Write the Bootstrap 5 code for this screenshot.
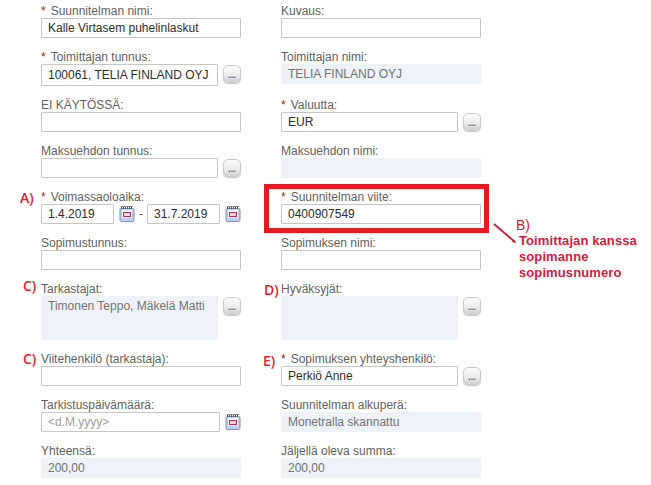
<!DOCTYPE html>
<html lang="fi">
<head>
<meta charset="utf-8">
<title>Suunnitelma</title>
<link href="https://cdn.jsdelivr.net/npm/bootstrap@5.3.0/dist/css/bootstrap.min.css" rel="stylesheet">
<style>
html,body{background:#fff;height:485px;overflow:hidden}
body{font-family:"Liberation Sans",Arial,sans-serif;font-size:12px;color:#333;position:relative}
.sheet{display:grid;grid-template-columns:200px 200px;column-gap:40px;row-gap:12px;padding:4px 0 0 41px;align-items:start}
.fld-label{display:block;margin:0;height:14px;line-height:14px;color:#626262;font-size:12px;white-space:nowrap}
.req{color:#8a2b2b;margin-right:5px}
.form-control.fld{height:20px;min-height:0;padding:0 6px;font-size:12px;line-height:18px;border:1px solid #c6c6c6;border-radius:1px;color:#2e2e2e;background:#fff;box-shadow:none;font-family:inherit}
.form-control.fld.tall{height:22px}
.form-control.fld.ro{background:#eef2f9;border-color:#eef2f9;color:#737373}
.form-control.fld.area{height:44px;resize:none;overflow:hidden}
.form-control.fld::placeholder{color:#a0a0a0;opacity:1}
.with-btn{gap:5px;align-items:flex-start}
.with-btn .form-control{flex:1 1 0;min-width:0}
.dots{flex:none;width:18px;height:18px;margin-top:1px;padding:0;border:1px solid #c9cbce;border-radius:5px;background:linear-gradient(#fdfdfd,#ececec 55%,#cfd1d4);color:#4a4f5c;font-size:9px;font-weight:700;line-height:19px;text-align:center;box-shadow:0 1px 1px #c4c4c4}
.cal{flex:none;width:16px;height:17px;display:block;margin-top:1px}
.date-in{flex:none;width:73px}
.form-control.fld.date-wide{flex:1 1 0;width:auto}
.dash{width:6px;text-align:center;line-height:20px;color:#555;flex:none;margin:0 -2px}
.ann{position:absolute;color:#e1202f;font-family:"Open Sans",sans-serif;font-weight:600;font-size:14px;line-height:16px;white-space:nowrap}
.ann-plain{position:absolute;left:516px;top:217px;color:#d3203a;font-family:"Liberation Sans",Arial,sans-serif;font-size:14px;line-height:16px}
.note{position:absolute;left:519px;top:233px;color:#d3203a;font-family:"Liberation Sans",Arial,sans-serif;font-weight:700;font-size:13px;letter-spacing:.1px;line-height:16px;white-space:nowrap}
.redbox{position:absolute;left:264px;top:184px;width:225px;height:49px;border:5px solid #e51b24;pointer-events:none}
.arrow{position:absolute;left:490px;top:220px}
</style>
</head>
<body>
<svg width="0" height="0" class="position-absolute">
  <defs>
    <symbol id="calicon" viewBox="0 0 16 17">
      <rect x="1" y="3.5" width="14" height="13" rx="1.5" fill="#bdd0ec" stroke="#7f93b5"/>
      <path d="M2.5 1v3M4.5 1v3M6.5 1v3M8.5 1v3M10.5 1v3M12.5 1v3" stroke="#555" stroke-width="1"/>
      <path d="M2 1.5h12" stroke="#888" stroke-width="1"/>
      <rect x="3" y="5" width="10" height="8" fill="#f4f5fa"/>
      <rect x="4.5" y="7.5" width="7" height="4" fill="#efd9e2" stroke="#b5304f"/>
    </symbol>
  </defs>
</svg>
<div class="sheet">
  <div><label class="fld-label"><span class="req">*</span>Suunnitelman nimi:</label><input class="form-control fld" value="Kalle Virtasem puhelinlaskut"></div>
  <div><label class="fld-label">Kuvaus:</label><input class="form-control fld"></div>

  <div><label class="fld-label"><span class="req">*</span>Toimittajan tunnus:</label><div class="d-flex with-btn"><input class="form-control fld tall" value="100061, TELIA FINLAND OYJ"><div class="dots">...</div></div></div>
  <div><label class="fld-label">Toimittajan nimi:</label><input class="form-control fld ro" readonly value="TELIA FINLAND OYJ"></div>

  <div><label class="fld-label">EI KÄYTÖSSÄ:</label><input class="form-control fld"></div>
  <div><label class="fld-label"><span class="req">*</span>Valuutta:</label><div class="d-flex with-btn"><input class="form-control fld" value="EUR"><div class="dots">...</div></div></div>

  <div><label class="fld-label">Maksuehdon tunnus:</label><div class="d-flex with-btn"><input class="form-control fld"><div class="dots">...</div></div></div>
  <div><label class="fld-label">Maksuehdon nimi:</label><input class="form-control fld ro" readonly></div>

  <div><label class="fld-label"><span class="req">*</span>Voimassaoloaika:</label>
    <div class="d-flex with-btn">
      <input class="form-control fld date-in" value="1.4.2019"><svg class="cal"><use href="#calicon"/></svg><span class="dash">-</span><input class="form-control fld date-in" value="31.7.2019"><svg class="cal"><use href="#calicon"/></svg>
    </div></div>
  <div><label class="fld-label"><span class="req">*</span>Suunnitelman viite:</label><input class="form-control fld" value="0400907549"></div>

  <div><label class="fld-label">Sopimustunnus:</label><input class="form-control fld"></div>
  <div><label class="fld-label">Sopimuksen nimi:</label><input class="form-control fld"></div>

  <div><label class="fld-label">Tarkastajat:</label><div class="d-flex with-btn"><textarea class="form-control fld ro area" readonly>Timonen Teppo, Mäkelä Matti</textarea><div class="dots">...</div></div></div>
  <div><label class="fld-label">Hyväksyjät:</label><div class="d-flex with-btn"><textarea class="form-control fld ro area" readonly></textarea><div class="dots">...</div></div></div>

  <div><label class="fld-label">Viitehenkilö (tarkastaja):</label><input class="form-control fld"></div>
  <div><label class="fld-label"><span class="req">*</span>Sopimuksen yhteyshenkilö:</label><div class="d-flex with-btn"><input class="form-control fld" value="Perkiö Anne"><div class="dots">...</div></div></div>

  <div><label class="fld-label">Tarkistuspäivämäärä:</label><div class="d-flex with-btn"><input class="form-control fld date-wide" placeholder="<d.M.yyyy>"><svg class="cal"><use href="#calicon"/></svg></div></div>
  <div><label class="fld-label">Suunnitelman alkuperä:</label><input class="form-control fld ro" readonly value="Monetralla skannattu"></div>

  <div><label class="fld-label">Yhteensä:</label><input class="form-control fld ro" readonly value="200,00"></div>
  <div><label class="fld-label">Jäljellä oleva summa:</label><input class="form-control fld ro" readonly value="200,00"></div>
</div>

<div class="redbox"></div>
<svg class="arrow" width="30" height="26"><path d="M4 4 L25 22" stroke="#c8203a" stroke-width="2" fill="none"/><path d="M26 23l-4-1 2-2z" fill="#c8203a"/></svg>
<div class="ann" style="left:20px;top:190px">A)</div>
<div class="ann" style="left:23px;top:278px">C)</div>
<div class="ann" style="left:23px;top:351px">C)</div>
<div class="ann" style="left:264px;top:282px">D)</div>
<div class="ann" style="left:263px;top:353px">E)</div>
<div class="ann-plain">B)</div>
<div class="note">Toimittajan kanssa<br>sopimanne<br>sopimusnumero</div>
</body>
</html>
